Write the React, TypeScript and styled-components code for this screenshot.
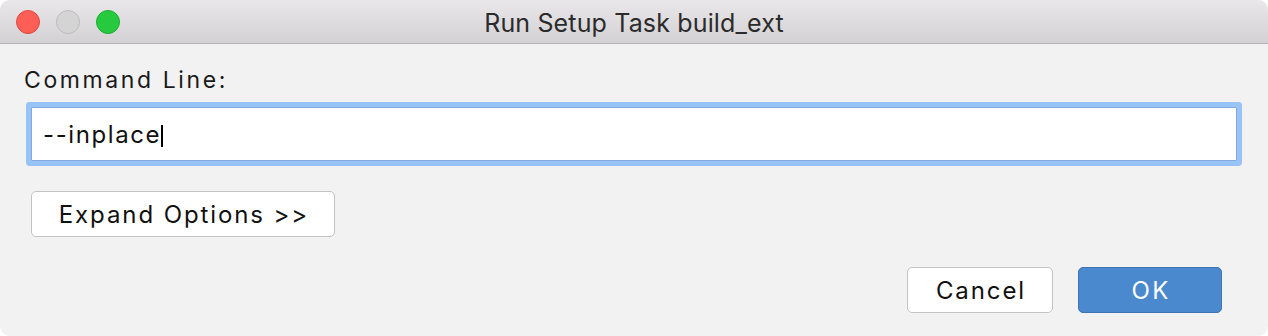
import React from "react";
import styled, { createGlobalStyle } from "styled-components";

const Global = createGlobalStyle`
  html, body { margin: 0; padding: 0; background: #ffffff; }
  body { font-family: Inter, "Noto Sans", "Liberation Sans", sans-serif; }
`;

const Window = styled.div`
  width: 1268px;
  height: 336px;
  border-radius: 10px;
  overflow: hidden;
  background: #f2f2f2;
  display: flex;
  flex-direction: column;
`;

const TitleBar = styled.div`
  height: 43px;
  flex: 0 0 auto;
  background: linear-gradient(#e9e7e9, #d3d1d3);
  border-bottom: 1px solid #b3b3b3;
  display: grid;
  grid-template-columns: 1fr auto 1fr;
  align-items: center;
`;

const Lights = styled.div`
  display: flex;
  gap: 16px;
  padding-left: 16px;
  margin-top: 1px;
`;

const Light = styled.span<{ $fill: string; $edge: string }>`
  width: 24px;
  height: 24px;
  border-radius: 50%;
  box-sizing: border-box;
  background: ${(p) => p.$fill};
  border: 1px solid ${(p) => p.$edge};
`;

const Title = styled.div`
  font-size: 25px;
  color: #2b2b2b;
  letter-spacing: 0.15px;
  margin-top: 2px;
`;

const Content = styled.div`
  flex: 1;
  display: flex;
  flex-direction: column;
  padding: 0 24px;
`;

const Label = styled.div`
  margin-top: 21px;
  font-size: 23px;
  line-height: 30px;
  color: #1a1a1a;
  letter-spacing: 2.6px;
`;

const Field = styled.div`
  margin: 12px 7px 0;
  height: 52px;
  background: #ffffff;
  border: 1px solid #84a9d8;
  border-radius: 1px;
  box-shadow: 0 0 0 5px #97c3f6;
  display: flex;
  align-items: center;
  padding-left: 11px;
  font-size: 24px;
  color: #111;
  letter-spacing: 1.6px;
`;

const Caret = styled.span`
  display: inline-block;
  width: 2px;
  height: 22px;
  margin-top: 3px;
  background: #000;
`;

const Button = styled.button<{ $primary?: boolean; $w: number; $ls: number }>`
  width: ${(p) => p.$w}px;
  height: 46px;
  box-sizing: border-box;
  border-radius: 5px;
  font-family: inherit;
  font-size: 24px;
  letter-spacing: ${(p) => p.$ls}px;
  text-indent: ${(p) => p.$ls}px;
  padding: 0;
  background: ${(p) => (p.$primary ? "#4a89ce" : "#ffffff")};
  color: ${(p) => (p.$primary ? "#ffffff" : "#111")};
  border: 1px solid ${(p) => (p.$primary ? "#3d74b5" : "#c3c3c3")};
`;

const OptionsRow = styled.div`
  margin-top: 30px;
  padding-left: 7px;
  display: flex;
`;

const Footer = styled.div`
  margin-top: 30px;
  display: flex;
  justify-content: flex-end;
  gap: 25px;
  padding-right: 22px;
`;

export default function App() {
  return (
    <>
      <Global />
      <Window>
        <TitleBar>
          <Lights>
            <Light $fill="#fd5f57" $edge="#df4a43" />
            <Light $fill="#d5d4d5" $edge="#bdbcbd" />
            <Light $fill="#27c93f" $edge="#1eab2f" />
          </Lights>
          <Title>Run Setup Task build_ext</Title>
          <div />
        </TitleBar>
        <Content>
          <Label>Command Line:</Label>
          <Field>
            --inplace<Caret />
          </Field>
          <OptionsRow>
            <Button $w={304} $ls={1.9}>Expand Options &gt;&gt;</Button>
          </OptionsRow>
          <Footer>
            <Button $w={146} $ls={1.9}>Cancel</Button>
            <Button $w={144} $ls={2.4} $primary>OK</Button>
          </Footer>
        </Content>
      </Window>
    </>
  );
}
